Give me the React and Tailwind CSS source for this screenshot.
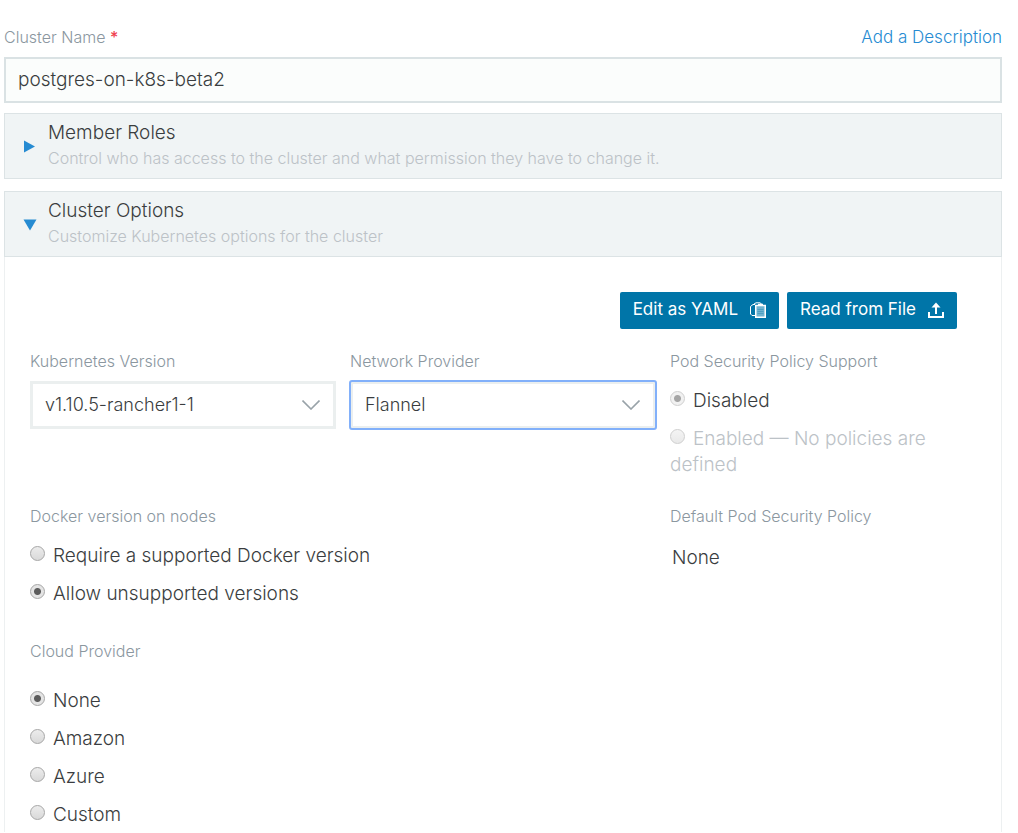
import { useState } from "react";

const FONT = "font-['Inter','Liberation_Sans',sans-serif]";

function FieldTitle({ as: Tag = "div", children, ...rest }) {
  return (
    <Tag className="block pb-0.5 text-base leading-[22px] text-[#8b979f]" {...rest}>
      {children}
    </Tag>
  );
}

function Radio({ name, checked, disabled, muted, onChange, children }) {
  return (
    <label className={muted ? "block text-[#bcc2c7]" : "block text-[#3a3d40]"}>
      <input
        type="radio"
        name={name}
        checked={checked}
        disabled={disabled}
        onChange={onChange}
        className="mr-2 inline-block size-[15px] appearance-none rounded-full border border-[#a6a6a6] bg-linear-to-b from-[#ececec] to-[#d9d9d9] align-[1px] checked:bg-[radial-gradient(circle,#5c5c5c_0_3px,#e4e4e4_4px)] disabled:border-[#cfcfcf] disabled:from-[#f4f4f4] disabled:to-[#e9e9e9] disabled:checked:bg-[radial-gradient(circle,#a5a5a5_0_3px,#f1f1f1_4px)]"
      />
      {children}
    </label>
  );
}

function RadioGroup({ name, label, options, initial, className }) {
  const [value, setValue] = useState(initial);
  return (
    <fieldset>
      <FieldTitle as="legend">{label}</FieldTitle>
      <div className={className}>
        <div className="flex flex-col gap-3 text-[19px] leading-[26px]">
          {options.map((option) => (
            <Radio
              key={option}
              name={name}
              checked={value === option}
              onChange={() => setValue(option)}
            >
              {option}
            </Radio>
          ))}
        </div>
      </div>
    </fieldset>
  );
}

function SelectField({ id, label, options, focused }) {
  return (
    <div>
      <FieldTitle as="label" htmlFor={id}>
        {label}
      </FieldTitle>
      <div className="mt-[7px] grid items-center">
        <select
          id={id}
          className={
            focused
              ? "col-start-1 row-start-1 h-12 w-full appearance-none rounded-xs border-3 border-[#ebefef] bg-white px-3 text-lg text-[#3a3d40] outline-2 -outline-offset-1 outline-[#82b0fa]"
              : "col-start-1 row-start-1 h-12 w-full appearance-none border-3 border-[#ebefef] bg-white px-3 text-lg text-[#3a3d40] outline-none"
          }
        >
          {options.map((option) => (
            <option key={option}>{option}</option>
          ))}
        </select>
        <svg
          viewBox="0 0 18 10"
          aria-hidden="true"
          className="pointer-events-none col-start-1 row-start-1 mr-4 h-2.5 w-[18px] justify-self-end"
          fill="none"
          stroke="#99a3a9"
          strokeWidth="1.6"
        >
          <path d="M0.5 0.5 9 9 17.5 0.5" />
        </svg>
      </div>
    </div>
  );
}

function SectionHeader({ title, detail, open, onClick }) {
  return (
    <button
      type="button"
      aria-expanded={open}
      onClick={onClick}
      className="flex w-full items-center border border-[#dce3e5] bg-[#f0f4f5] pt-[5px] pr-4 pb-[7px] pl-[18px] text-left"
    >
      <svg viewBox="0 0 14 16" aria-hidden="true" className="mr-[11px] h-4 w-3.5 shrink-0" fill="#268bd2">
        {open ? <path d="M0.5 4.5H13.5L7 15.5Z" /> : <path d="M1 3.5V15.5L12 9.5Z" />}
      </svg>
      <span className="block">
        <span className="block text-[19px] leading-[27px] text-[#3a3d40]">{title}</span>
        <span className="block text-base leading-[25px] text-[#bcc2c7]">{detail}</span>
      </span>
    </button>
  );
}

function ClipboardIcon() {
  return (
    <svg viewBox="0 0 16 16" aria-hidden="true" className="size-4" fill="none" stroke="#fff">
      <path d="M5 13.5H2L0.5 12V4.5L3 2.5H5" />
      <path d="M4 2 6 0.8H10L12 2.5" />
      <rect x="5.5" y="3.5" width="10" height="12" fill="#6fb3d0" />
      <path d="M5 3.5H16M8 2.5H13" strokeWidth="1.5" />
      <path d="M5.75 3V15.25H15.25V3" strokeWidth="1.5" />
      <path d="M7.5 7.5H13.5M7.5 9.5H13.5M7.5 11.5H13.5" stroke="#4d9fc2" />
    </svg>
  );
}

function UploadIcon() {
  return (
    <svg viewBox="0 0 16 16" aria-hidden="true" className="size-4" fill="none" stroke="#fff" strokeWidth="2">
      <path d="M8 12V3" />
      <path d="M3.5 5.5H12.5L8 0.5Z" fill="#fff" stroke="none" />
      <path d="M1 10V15H15V10" />
    </svg>
  );
}

function ActionButton({ icon, children }) {
  return (
    <button
      type="button"
      className="flex h-[37px] items-center gap-3 rounded-xs bg-[#0075a8] px-[13px] pb-0.5 text-[17px] font-normal whitespace-nowrap text-white"
    >
      {children}
      {icon}
    </button>
  );
}

export default function App() {
  const [membersOpen, setMembersOpen] = useState(false);
  const [optionsOpen, setOptionsOpen] = useState(true);

  return (
    <main className={`${FONT} bg-white pt-[26px] pr-4 pl-1 font-light text-[#3a3d40]`}>
      <div className="mb-[7px] flex items-start justify-between">
        <FieldTitle as="label" htmlFor="cluster-name">
          Cluster Name <span className="font-medium text-[#f0414f]">*</span>
        </FieldTitle>
        <a href="#description" className="text-[17px] leading-[22px] text-[#268bd2]">
          Add a Description
        </a>
      </div>
      <input
        id="cluster-name"
        type="text"
        defaultValue="postgres-on-k8s-beta2"
        className="block h-[46px] w-full border-2 border-[#dae2e4] bg-[#fbfdfc] px-3 pb-0.5 text-[19px] outline-none"
      />

      <section className="mt-2.5">
        <SectionHeader
          title="Member Roles"
          detail="Control who has access to the cluster and what permission they have to change it."
          open={membersOpen}
          onClick={() => setMembersOpen(!membersOpen)}
        />
      </section>

      <section className="mt-3">
        <SectionHeader
          title="Cluster Options"
          detail="Customize Kubernetes options for the cluster"
          open={optionsOpen}
          onClick={() => setOptionsOpen(!optionsOpen)}
        />
        {optionsOpen && (
          <div className="border-x border-[#edf0f1] px-[25px] pt-[35px] pb-1">
            <div className="mr-[19px] flex justify-end gap-2">
              <ActionButton icon={<ClipboardIcon />}>Edit as YAML</ActionButton>
              <ActionButton icon={<UploadIcon />}>Read from File</ActionButton>
            </div>

            <div className="mt-[21px] grid grid-cols-3 gap-x-3.5">
              <SelectField id="k8s-version" label="Kubernetes Version" options={["v1.10.5-rancher1-1"]} />
              <SelectField id="network" label="Network Provider" options={["Flannel"]} focused />
              <fieldset>
                <FieldTitle as="legend">Pod Security Policy Support</FieldTitle>
                <div className="mt-3.5 flex flex-col gap-3 text-[19px] leading-[26px]">
                  <Radio name="psp" checked disabled>
                    Disabled
                  </Radio>
                  <Radio name="psp" checked={false} disabled muted>
                    Enabled — No policies are defined
                  </Radio>
                </div>
              </fieldset>
            </div>

            <div className="mt-[27px] grid grid-cols-3 gap-x-3.5">
              <div className="col-span-2">
                <RadioGroup
                  name="docker"
                  label="Docker version on nodes"
                  className="pt-3.5"
                  options={["Require a supported Docker version", "Allow unsupported versions"]}
                  initial="Allow unsupported versions"
                />
              </div>
              <div>
                <FieldTitle>Default Pod Security Policy</FieldTitle>
                <div className="mt-4 pl-0.5 text-[19px] leading-[26px]">None</div>
              </div>
            </div>

            <div className="mt-[33px]">
              <RadioGroup
                name="cloud"
                label="Cloud Provider"
                className="pt-6"
                options={["None", "Amazon", "Azure", "Custom"]}
                initial="None"
              />
            </div>
          </div>
        )}
      </section>
    </main>
  );
}
